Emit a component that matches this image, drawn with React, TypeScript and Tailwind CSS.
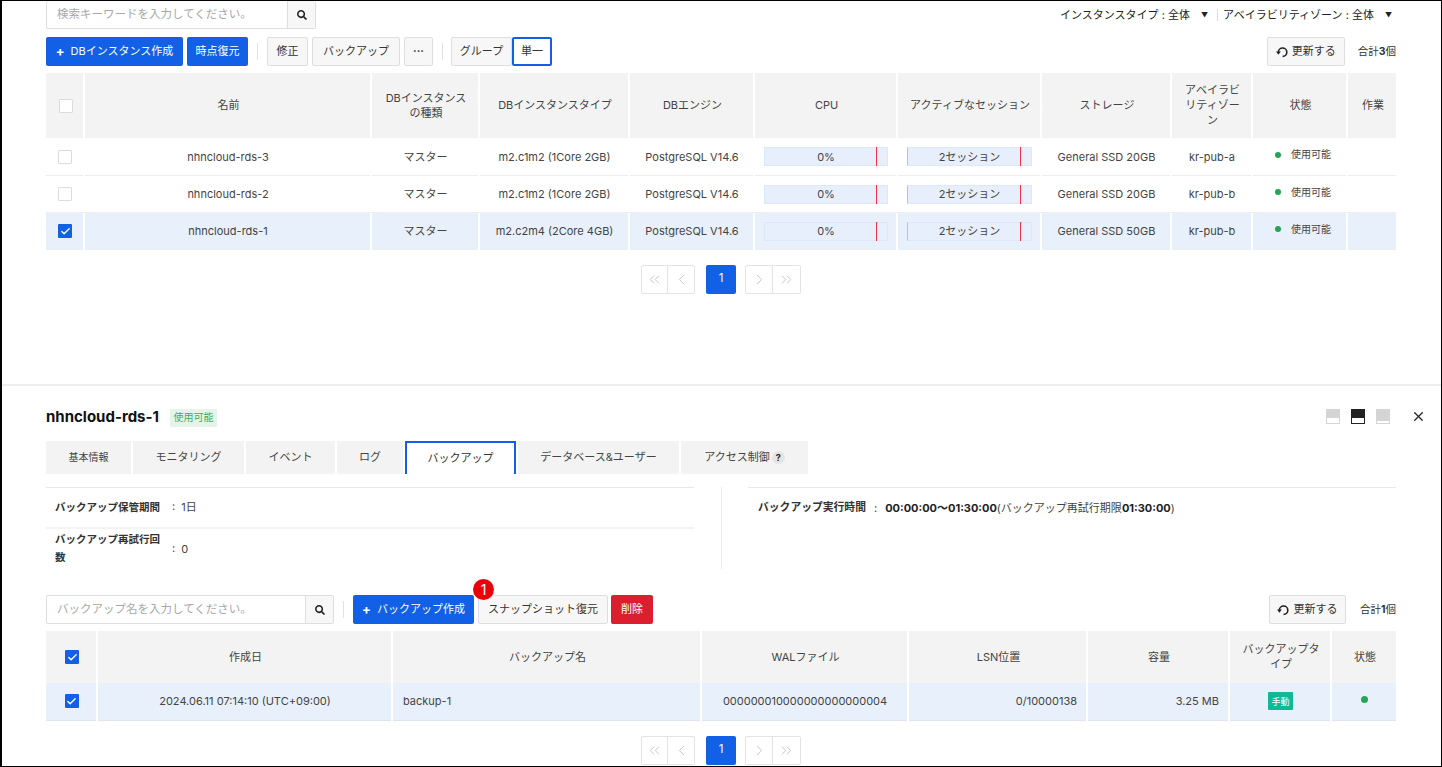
import { Check, ChevronLeft, ChevronRight, ChevronsLeft, ChevronsRight, X } from 'lucide-react'
import { FaSearch } from 'react-icons/fa'

const FONT = "font-['Inter','Noto_Sans_CJK_JP',sans-serif]"

const INSTANCES = [
  { name: 'nhncloud-rds-3', type: 'm2.c1m2 (1Core 2GB)', storage: 'General SSD 20GB', zone: 'kr-pub-a', selected: false },
  { name: 'nhncloud-rds-2', type: 'm2.c1m2 (1Core 2GB)', storage: 'General SSD 20GB', zone: 'kr-pub-b', selected: false },
  { name: 'nhncloud-rds-1', type: 'm2.c2m4 (2Core 4GB)', storage: 'General SSD 50GB', zone: 'kr-pub-b', selected: true },
]

const TABS = [
  { label: '基本情報', width: 'w-[85px] text-[10px]' },
  { label: 'モニタリング', width: 'w-[111px] text-[11px]' },
  { label: 'イベント', width: 'w-[89px] text-[11px]' },
  { label: 'ログ', width: 'w-[66px] text-[11px]' },
  { label: 'バックアップ', width: 'w-[111px] text-[11px]', active: true },
  { label: 'データベース&ユーザー', width: 'w-[161px] text-[11px]' },
]

function Checkbox({ checked }: { checked?: boolean }) {
  if (checked) {
    return (
      <span className="mx-auto flex h-[14px] w-[14px] items-center justify-center rounded-[1px] bg-[#1260e6]">
        <Check size={11} color="white" strokeWidth={3} />
      </span>
    )
  }
  return <span className="mx-auto block h-[14px] w-[14px] rounded-[1px] border border-[#dcdcdc] bg-white" />
}

function Button({ children, className = '' }: { children: React.ReactNode; className?: string }) {
  return (
    <button className={`flex h-[29px] items-center justify-center rounded-[2px] border border-[#dedede] bg-[#f7f7f7] text-[11px] text-[#333] ${className}`}>
      {children}
    </button>
  )
}

function PrimaryButton({ children, className = '' }: { children: React.ReactNode; className?: string }) {
  return (
    <button className={`flex h-[29px] items-center justify-center rounded-[2px] bg-[#1260e6] text-[11px] text-white ${className}`}>
      {children}
    </button>
  )
}

function RefreshIcon() {
  return (
    <svg width="12" height="12" viewBox="0 0 12 12" fill="none" className="mr-[4px]">
      <path d="M6.6 10.4A4.2 4.2 0 1 0 2.4 6.2" stroke="#222" strokeWidth="1.6" />
      <path d="M0 5.6H4.8L2.4 8.8Z" fill="#222" />
    </svg>
  )
}

function SearchBox({ placeholder, className, noTop }: { placeholder: string; className: string; noTop?: boolean }) {
  return (
    <div className={`flex rounded-[2px] border border-[#dedede] ${noTop ? 'h-[28px] border-t-0' : 'h-[29px]'} ${className}`}>
      <div className="flex flex-1 items-center pl-[10px] text-[11.5px] text-[#a8a8a8]">{placeholder}</div>
      <div className="flex w-[28px] items-center justify-center border-l border-[#dedede] bg-[#f7f7f7]">
        <FaSearch size={10} color="#222" />
      </div>
    </div>
  )
}

function Pagination() {
  const cell = 'flex h-[27px] items-center justify-center'
  return (
    <div className="flex justify-center">
      <div className="flex rounded-[2px] border border-[#e4e4e4] bg-white">
        <span className={`${cell} w-[26px] border-r border-[#e4e4e4]`}><ChevronsLeft size={17} color="#c4c4c4" strokeWidth={1.4} /></span>
        <span className={`${cell} w-[26px]`}><ChevronLeft size={17} color="#c4c4c4" strokeWidth={1.4} /></span>
      </div>
      <span className="ml-[11px] mr-[9px] flex h-[29px] w-[30px] items-center justify-center rounded-[2px] bg-[#1260e6] text-[11.5px] text-white">1</span>
      <div className="flex rounded-[2px] border border-[#e4e4e4] bg-white">
        <span className={`${cell} w-[27px] border-r border-[#e4e4e4]`}><ChevronRight size={17} color="#c4c4c4" strokeWidth={1.4} /></span>
        <span className={`${cell} w-[27px]`}><ChevronsRight size={17} color="#c4c4c4" strokeWidth={1.4} /></span>
      </div>
    </div>
  )
}

function UsageBar({ label, left, accent }: { label: string; left: string; accent?: boolean }) {
  return (
    <div className={`relative mx-auto flex h-[19px] items-center justify-center border border-[#dce7fa] bg-[#e7effc] text-[11px] text-[#444] ${accent ? 'w-[125px] border-l-[#a9c5f2]' : 'w-[124px]'}`}>
      {label}
      <span className={`absolute -top-px h-[19px] w-px bg-[#f0323c] ${left}`} />
    </div>
  )
}

const thClass = 'border-l-2 border-white bg-[#f3f3f3] pl-[9px] pr-[7px] text-center text-[11px] font-normal leading-[15px] text-[#444] first:border-l-0'
const tdClass = 'border-l-2 pl-[5px] pr-[4px] text-center text-[11px] text-[#444] first:border-l-0'

function InstanceTable() {
  const headers = ['名前', 'DBインスタンスの種類', 'DBインスタンスタイプ', 'DBエンジン', 'CPU', 'アクティブなセッション', 'ストレージ', 'アベイラビリティゾーン', '状態', '作業']
  const widths = ['w-[38px]', 'w-[287px]', 'w-[108px]', 'w-[150px]', 'w-[125px]', 'w-[143px]', 'w-[144px]', 'w-[130px]', 'w-[81px]', 'w-[95px]', 'w-[49px]']
  return (
    <table className="w-[1350px] table-fixed border-collapse">
      <colgroup>
        {widths.map((width, index) => (
          <col key={index} className={width} />
        ))}
      </colgroup>
      <thead>
        <tr className="h-[65px]">
          <th className={thClass}><Checkbox /></th>
          {headers.map((header) => (
            <th key={header} className={thClass}>{header}</th>
          ))}
        </tr>
      </thead>
      <tbody>
        {INSTANCES.map((row) => {
          const cellClass = `${tdClass} pt-[1px] ${row.selected ? 'border-white bg-[#e8f0fc]' : 'border-transparent'}`
          return (
            <tr key={row.name} className={`h-[37px] border-b border-[#eeeeee] ${row.selected ? 'border-[#dfe5ee]' : ''}`}>
              <td className={cellClass}><Checkbox checked={row.selected} /></td>
              <td className={cellClass}>{row.name}</td>
              <td className={cellClass}>マスター</td>
              <td className={cellClass}>{row.type}</td>
              <td className={cellClass}>PostgreSQL V14.6</td>
              <td className={cellClass}><UsageBar label="0%" left="left-[111px]" /></td>
              <td className={cellClass}><UsageBar label="2セッション" left="left-[112px]" accent /></td>
              <td className={cellClass}>{row.storage}</td>
              <td className={cellClass}>{row.zone}</td>
              <td className={cellClass}>
                <div className="flex -translate-y-[2px] translate-x-[3px] items-center justify-center gap-[10px] text-[10px]">
                  <span className="h-[6px] w-[6px] rounded-full bg-[#22a655]" />
                  使用可能
                </div>
              </td>
              <td className={cellClass} />
            </tr>
          )
        })}
      </tbody>
    </table>
  )
}

function BackupTable() {
  const widths = ['w-[51px]', 'w-[295px]', 'w-[309px]', 'w-[207px]', 'w-[179px]', 'w-[142px]', 'w-[102px]', 'w-[65px]']
  const headers = ['作成日', 'バックアップ名', 'WALファイル', 'LSN位置', '容量', 'バックアップタイプ', '状態']
  const cellClass = `${tdClass} border-white bg-[#e8f0fc]`
  return (
    <table className="w-[1350px] table-fixed border-collapse">
      <colgroup>
        {widths.map((width, index) => (
          <col key={index} className={width} />
        ))}
      </colgroup>
      <thead>
        <tr className="h-[52px]">
          <th className={thClass}><Checkbox checked /></th>
          {headers.map((header) => (
            <th key={header} className={thClass}>{header}</th>
          ))}
        </tr>
      </thead>
      <tbody>
        <tr className="h-[37px] border-b border-[#dfe5ee]">
          <td className={cellClass}><Checkbox checked /></td>
          <td className={cellClass}>2024.06.11 07:14:10 (UTC+09:00)</td>
          <td className={`${cellClass} !pl-[10px] !text-left`}>backup-1</td>
          <td className={cellClass}>000000010000000000000004</td>
          <td className={`${cellClass} !pr-[9px] !text-right`}>0/10000138</td>
          <td className={`${cellClass} !pr-[9px] !text-right`}>3.25 MB</td>
          <td className={cellClass}>
            <span className="mx-auto flex h-[18px] w-[25px] items-center justify-center rounded-[1px] bg-[#12b896] text-[9px] text-white">手動</span>
          </td>
          <td className={cellClass}>
            <span className="mx-auto block h-[7px] w-[7px] -translate-y-[2px] rounded-full bg-[#22a655]" />
          </td>
        </tr>
      </tbody>
    </table>
  )
}

function LayoutIcon({ tone }: { tone: 'light' | 'dark' | 'thin' }) {
  const frame = tone === 'dark' ? 'bg-[#222]' : 'bg-[#d4d4d4]'
  const inner = tone === 'thin' ? 'h-[2px]' : 'h-[5px]'
  return (
    <span className={`flex h-[15px] w-[14px] items-end px-[1px] pb-[1px] ${frame}`}>
      <span className={`block w-full bg-white ${inner}`} />
    </span>
  )
}

function Divider({ className = '' }: { className?: string }) {
  return <span className={`h-[17px] w-px bg-[#e2e2e2] ${className}`} />
}

export default function App() {
  return (
    <div className={`${FONT} flex h-[767px] w-[1442px] flex-col overflow-hidden border border-l-2 border-black bg-white`}>
      <section className="h-[383px] shrink-0 pl-[44px] pr-[45px]">
        <div className="flex h-[28px] items-center justify-between">
          <SearchBox placeholder="検索キーワードを入力してください。" className="w-[270px]" noTop />
          <div className="flex items-center text-[11px] text-[#222]">
            <span>インスタンスタイプ : 全体</span>
            <span className="ml-[11px] translate-y-[1px] text-[7px]">▼</span>
            <span className="mx-[5px] ml-[9px] h-[12px] w-px bg-[#ddd]" />
            <span>アベイラビリティゾーン : 全体</span>
            <span className="ml-[11px] mr-[4px] translate-y-[1px] text-[7px]">▼</span>
          </div>
        </div>
        <div className="mt-[8px] flex items-center">
          <PrimaryButton className="w-[137px] gap-[6px]"><span className="text-[13px] font-bold leading-none">+</span>DBインスタンス作成</PrimaryButton>
          <PrimaryButton className="ml-[4px] w-[61px]">時点復元</PrimaryButton>
          <Divider className="mx-[9px]" />
          <Button className="w-[41px]">修正</Button>
          <Button className="ml-[4px] w-[88px]">バックアップ</Button>
          <Button className="ml-[4px] w-[29px] font-bold">···</Button>
          <Divider className="ml-[9px] mr-[8px]" />
          <Button className="w-[61px]">グループ</Button>
          <Button className="w-[40px] border-2 !border-[#1260e6] bg-white">単一</Button>
          <div className="ml-auto flex items-center">
            <Button className="w-[78px]"><RefreshIcon />更新する</Button>
            <span className="ml-[13px] text-[10.5px] text-[#333]">合計<b>3</b>個</span>
          </div>
        </div>
        <div className="mt-[7px]">
          <InstanceTable />
        </div>
        <div className="mt-[15px]">
          <Pagination />
        </div>
      </section>

      <div className="h-[2px] shrink-0 bg-[#eeeeee]" />

      <section className="relative flex-1 pl-[44px] pr-[45px]">
        <div className="flex h-[55px] items-center pt-[8px]">
          <h2 className="text-[15px] font-bold text-[#111]">nhncloud-rds-1</h2>
          <span className="ml-[11px] flex h-[18px] w-[47px] items-center justify-center rounded-[1px] bg-[#e4f4e8] text-[10px] text-[#3cb062]">使用可能</span>
          <div className="mb-[3px] ml-auto flex items-center gap-[11px]">
            <LayoutIcon tone="light" />
            <LayoutIcon tone="dark" />
            <LayoutIcon tone="thin" />
            <X size={15} color="#222" strokeWidth={2} className="ml-[10px] mr-[-30px]" />
          </div>
        </div>
        <div className="flex h-[33px] gap-[2px]">
          {TABS.map((tab) => (
            <div
              key={tab.label}
              className={`flex items-center justify-center ${tab.width} ${tab.active ? 'border-2 border-b-0 border-[#1260e6] bg-white text-[#333]' : 'bg-[#f3f3f3] text-[#444]'}`}
            >
              {tab.label}
            </div>
          ))}
          <div className="flex w-[127px] items-center justify-center gap-[2px] bg-[#f3f3f3] text-[11px] text-[#444]">
            アクセス制御
            <span className="flex h-[13px] w-[13px] items-center justify-center rounded-full bg-[#e4e4e4] text-[9px] font-bold text-[#222]">?</span>
          </div>
        </div>

        <div className="mt-[13px] flex h-[82px]">
          <div className="w-[648px] border-t border-[#e8e8e8] text-[11px]">
            <div className="flex h-[41px] items-center border-b-2 border-[#f3f3f3] pl-[9px]">
              <b className="w-[115px] text-[10.5px] text-[#333]">バックアップ保管期間</b>
              <span className="ml-[2px] text-[#444]">:&nbsp;&nbsp;1日</span>
            </div>
            <div className="flex h-[40px] items-center pl-[9px]">
              <b className="w-[115px] text-[10.5px] leading-[18px] text-[#333]">バックアップ再試行回数</b>
              <span className="ml-[2px] text-[#444]">:&nbsp;&nbsp;0</span>
            </div>
          </div>
          <div className="ml-[27px] w-px bg-[#ececec]" />
          <div className="ml-[26px] flex-1 border-t border-[#e8e8e8] text-[11px]">
            <div className="flex h-[40px] items-center pl-[10px]">
              <b className="text-[10.8px] text-[#333]">バックアップ実行時間</b>
              <span className="mx-[8px] text-[#444]">:</span>
              <span className="text-[#444]"><b className="text-[#222]">00:00:00〜01:30:00</b>(バックアップ再試行期限<b className="text-[#222]">01:30:00</b>)</span>
            </div>
          </div>
        </div>

        <div className="mt-[26px] flex items-center">
          <SearchBox placeholder="バックアップ名を入力してください。" className="w-[288px]" />
          <Divider className="mx-[9px]" />
          <div className="relative flex items-center">
            <PrimaryButton className="w-[121px] gap-[6px]"><span className="text-[13px] font-bold leading-none">+</span>バックアップ作成</PrimaryButton>
            <Button className="ml-[4px] w-[130px]">スナップショット復元</Button>
            <button className="ml-[3px] flex h-[29px] w-[42px] items-center justify-center rounded-[2px] bg-[#dc1f2e] text-[11px] text-white">削除</button>
            <span className="absolute left-[120px] top-[-16px] flex h-[21px] w-[21px] items-center justify-center rounded-full bg-[#e8000b] text-[14px] text-white">1</span>
          </div>
          <div className="ml-auto flex items-center">
            <Button className="w-[77px]"><RefreshIcon />更新する</Button>
            <span className="ml-[14px] text-[10.5px] text-[#333]">合計<b>1</b>個</span>
          </div>
        </div>
        <div className="mt-[7px]">
          <BackupTable />
        </div>
        <div className="mt-[15px]">
          <Pagination />
        </div>
      </section>
    </div>
  )
}
